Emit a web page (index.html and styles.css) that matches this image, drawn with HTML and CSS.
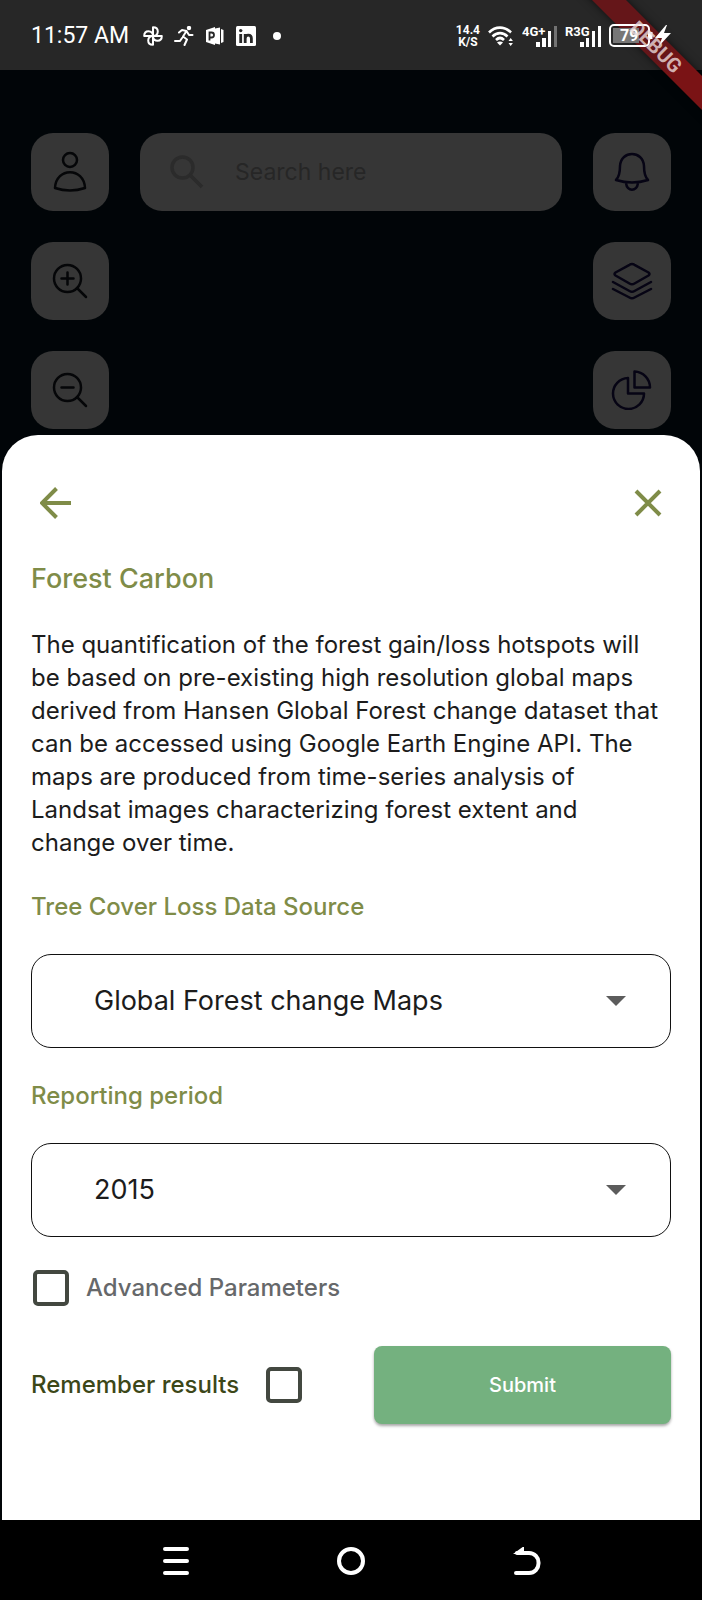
FILE: index.html
```html
<!DOCTYPE html>
<html lang="en">
<head>
<meta charset="utf-8">
<meta name="viewport" content="width=device-width, initial-scale=1">
<title>Forest Carbon</title>
<link rel="stylesheet" href="styles.css">
</head>
<body>
<header class="status">
  <div class="status-left">
    <span class="clock">11:57 AM</span>
    <svg width="20" height="20" viewBox="0 0 20 20" fill="none" stroke="#fff" stroke-width="2" stroke-linejoin="round"><path d="M10 10V1.200C13 1.200 14.800 3 14.800 5.500S13 10 10 10zM10 10H18.800C18.800 13 17 14.800 14.500 14.800S10 13 10 10zM10 10V18.800C7 18.800 5.200 17 5.200 14.500S7 10 10 10zM10 10H1.200C1.200 7 3 5.200 5.500 5.200S10 7 10 10z"/></svg>
    <svg width="20" height="20" viewBox="0 0 20 20" fill="none" stroke="#fff" stroke-width="2" stroke-linecap="round" stroke-linejoin="round"><circle cx="15" cy="2" r="1.200" fill="#fff"/><path d="M5 6.500L8 4l4.500 1L9 10.500l4 3L10.500 19M12.500 5l2.500 4h3.500M8 12l-2 3H1"/></svg>
    <svg width="20" height="20" viewBox="0 0 20 20"><path fill="#fff" d="M1 4l9-3v18l-9-3zM10 2.500l5-1v17l-5-1zM16 3l2.500 1v12L16 17z"/><path d="M4.500 14.500V6.500h2a2.300 2.300 0 010 5h-2" fill="none" stroke="#272727" stroke-width="1.800"/></svg>
    <svg width="20" height="20" viewBox="0 0 20 20"><rect width="20" height="20" rx="1.500" fill="#fff"/><circle cx="4.700" cy="4.600" r="1.700" fill="#272727"/><path d="M4.700 8v9M9.200 17V8M9.200 12.500c0-4.500 6.200-4.500 6.200 0V17" fill="none" stroke="#272727" stroke-width="2.800"/></svg>
    <span class="dot"></span>
  </div>
  <div class="status-right">
    <div class="speed"><span>14.4</span><span>K/S</span></div>
    <svg width="26" height="22" viewBox="0 0 26 22" fill="none" stroke="#fff" stroke-width="2.600"><path d="M1 7.500C7.500 1 16.500 1 23 7.500M4.500 11.500c4.500-4.500 10.500-4.500 15 0M8 15c2.500-2.500 5.500-2.500 8 0"/><path d="M9 17.500L12 20.500l3-3c-1.500-1.500-4.500-1.500-6 0z" fill="#fff" stroke="none"/><path d="M20.500 16l2.200-3 2.200 3zM20.500 18l2.200 3 2.200-3z" fill="#fff" stroke="none"/></svg>
    <svg class="signal" width="35" height="22" viewBox="0 0 35 22"><text x="0" y="11">4G+</text><path d="M14 17h4v5h-4zM20 13h4v9h-4zM26 6h3v16h-3z"/><path d="M32 1h3v21h-3z" opacity=".35"/></svg>
    <svg class="signal" width="36" height="22" viewBox="0 0 36 22"><text x="0" y="11">R3G</text><path d="M15 17h4v5h-4zM21 13h3v9h-3zM27 6h3v16h-3zM33 1h3v21h-3z"/></svg>
    <svg class="battery" width="62" height="24" viewBox="0 0 62 24"><rect x="1" y="1" width="39" height="21" rx="4" fill="none" stroke="#fff" stroke-width="2"/><rect x="4" y="4" width="26" height="15" fill="#777"/><path d="M42 8v7" stroke="#fff" stroke-width="3"/><text x="11" y="17">79</text><path d="M57 1L46 14h7l-3 8 12-13h-7l3-8z" fill="#fff"/></svg>
  </div>
</header>
<div class="debug"><span>DEBUG</span></div>

<main>
  <section class="map">
    <div class="tools">
      <button class="tile" aria-label="Profile"><svg width="36" height="44" viewBox="0 0 36 44"><circle cx="18" cy="10" r="7"/><path d="M3 38C4 17 32 17 33 38Q18 43 3 38z"/></svg></button>
      <button class="tile" aria-label="Zoom in"><svg width="36" height="36" viewBox="0 0 36 36"><circle cx="15.500" cy="15.500" r="13.500"/><path d="M25 25l9 9M15.500 9.500v12M9.500 15.500h12"/></svg></button>
      <button class="tile" aria-label="Zoom out"><svg width="36" height="36" viewBox="0 0 36 36"><circle cx="15.500" cy="15.500" r="13.500"/><path d="M25 25l9 9M9.500 15.500h12"/></svg></button>
    </div>
    <label class="search">
      <svg width="34" height="34" viewBox="0 0 34 34" fill="none" stroke="#2b2b2b" stroke-width="3.500"><circle cx="12.500" cy="12.500" r="10.500"/><path d="M20 20l12 12"/></svg>
      <input type="search" placeholder="Search here" aria-label="Search here">
    </label>
    <div class="tools navy">
      <button class="tile" aria-label="Notifications"><svg width="36" height="40" viewBox="0 0 36 40"><path d="M2 28q4-4 4-14C7-2 29-2 30 14q0 10 4 14Q18 33 2 28zM12 31c1 9 11 9 12 0"/></svg></button>
      <button class="tile" aria-label="Layers"><svg width="42" height="38" viewBox="0 0 42 38"><path d="M18.500 2.800q2.500-1.600 5 0l14 7.700q2 1.500 0 3l-14 8q-2.500 1.500-5 0l-14-8q-2-1.500 0-3zM2 20l16.500 9q2.500 1.500 5 0L40 20M2 27l16.500 8.500q2.500 1.500 5 0L40 27"/></svg></button>
      <button class="tile" aria-label="Charts"><svg width="42" height="40" viewBox="0 0 42 40"><path d="M17 8a15.500 15.500 0 1016 15.500H17zM23.500 1.500V17.500H39A16 16 0 0023.500 1.500z"/></svg></button>
    </div>
  </section>

  <form class="sheet">
    <div class="sheet-bar">
      <button type="button" class="icon" aria-label="Back"><svg width="32" height="32" viewBox="0 0 32 32"><path d="M31 16H3M16.500 1.500L2 16l14.500 14.500"/></svg></button>
      <button type="button" class="icon" aria-label="Close"><svg width="28" height="28" viewBox="0 0 28 28"><path d="M2 2l24 24M26 2L2 26"/></svg></button>
    </div>
    <h1>Forest Carbon</h1>
    <p>The quantification of the forest gain/loss hotspots will be based on pre-existing high resolution global maps derived from Hansen Global Forest change dataset that can be accessed using Google Earth Engine API. The maps are produced from time-series analysis of<br>Landsat images characterizing forest extent and<br>change over time.</p>
    <label class="field-label" for="source">Tree Cover Loss Data Source</label>
    <div class="select">
      <select id="source"><option>Global Forest change Maps</option></select>
      <svg width="20" height="10" viewBox="0 0 20 10"><path d="M0 0h20L10 10z"/></svg>
    </div>
    <label class="field-label" for="period">Reporting period</label>
    <div class="select">
      <select id="period"><option>2015</option></select>
      <svg width="20" height="10" viewBox="0 0 20 10"><path d="M0 0h20L10 10z"/></svg>
    </div>
    <label class="check advanced"><input type="checkbox"><span>Advanced Parameters</span></label>
    <div class="actions">
      <label class="check remember"><span>Remember results</span><input type="checkbox"></label>
      <button type="submit" class="submit">Submit</button>
    </div>
  </form>
</main>

<nav class="navbar">
  <button aria-label="Recent apps"><svg width="28" height="28" viewBox="0 0 28 28"><path d="M3 2h22M3 14h22M3 26h22"/></svg></button>
  <button aria-label="Home"><svg width="28" height="28" viewBox="0 0 28 28"><circle cx="14" cy="14" r="12"/></svg></button>
  <button aria-label="Back"><svg width="28" height="28" viewBox="0 0 28 28"><path d="M3 26h13a9.500 9.500 0 009.500-10A9.500 9.500 0 0016 6H4"/><path d="M3 6L10 1v5z" fill="#fff" stroke-width="2"/></svg></button>
</nav>
</body>
</html>
```
FILE: styles.css
```css
* { box-sizing: border-box; }

body {
  margin: 0;
  min-height: 100vh;
  display: flex;
  flex-direction: column;
  position: relative;
  overflow-x: hidden;
  background: #010508;
  font-family: Inter, "Liberation Sans", sans-serif;
}

button {
  border: 0;
  padding: 0;
  background: none;
  font-family: inherit;
}

svg { display: block; flex: none; }

/* Status bar */
.status {
  height: 70px;
  padding: 2px 31px 0;
  display: flex;
  align-items: center;
  justify-content: space-between;
  background: #272727;
  color: #fff;
  font-family: Roboto, sans-serif;
}

.status-left, .status-right { display: flex; align-items: center; }
.status-left { gap: 11px; }
.status-right { gap: 8px; position: relative; z-index: 2; }
.clock { font-size: 23px; line-height: 28px; margin-right: 3px; }
.dot { width: 8px; height: 8px; margin-left: 6px; border-radius: 50%; background: #fff; }

.speed {
  display: flex;
  flex-direction: column;
  align-items: center;
  font-size: 12px;
  font-weight: 700;
  line-height: 12px;
}

.signal { fill: #fff; font-size: 13px; font-weight: 700; }
.battery { fill: #fff; font-size: 16px; font-weight: 700; }

/* The band lies under the status icons, its lettering over them */
.debug {
  position: absolute;
  top: 0;
  right: 0;
  width: 140px;
  height: 140px;
  overflow: hidden;
  pointer-events: none;
}

.debug::before, .debug span {
  position: absolute;
  top: 35px;
  right: -54px;
  width: 200px;
  height: 24px;
  rotate: 45deg;
}

.debug::before {
  content: "";
  z-index: 1;
  background: linear-gradient(to right, #651619 55%, #7a1315 65%);
  box-shadow: 0 0 8px rgba(0, 0, 0, .6);
}

.debug span {
  z-index: 3;
  color: rgba(235, 220, 220, .8);
  font: 700 20px/24px Roboto, sans-serif;
  text-align: center;
}

main { flex: 1; display: flex; flex-direction: column; }

/* Dimmed map behind the sheet */
.map {
  padding: 63px 31px 6px;
  display: flex;
  align-items: flex-start;
  gap: 31px;
}

.tools { display: flex; flex-direction: column; gap: 31px; }

.tile {
  width: 78px;
  height: 78px;
  border-radius: 22px;
  background: #363636;
  display: grid;
  place-items: center;
}

.tile svg {
  fill: none;
  stroke: #050608;
  stroke-width: 2.5;
  stroke-linecap: round;
  stroke-linejoin: round;
}

.navy svg { stroke: #060414; }

.search {
  flex: 1;
  min-width: 0;
  height: 78px;
  padding: 0 30px;
  border-radius: 22px;
  background: #363636;
  display: flex;
  align-items: center;
  gap: 31px;
}

.search input {
  flex: 1;
  min-width: 0;
  border: 0;
  padding: 0;
  background: none;
  font: 400 23px/30px Inter, sans-serif;
  color: #222;
}

.search input::placeholder { color: #262626; opacity: 1; }

/* Sheet */
.sheet {
  flex: 1;
  margin: 0 2px;
  padding: 48px 29px 88px;
  border-radius: 36px 36px 0 0;
  background: #fff;
  color: #1c1c1c;
}

.sheet-bar { display: flex; justify-content: space-between; padding: 0 9px; }
.icon { height: 40px; display: grid; place-items: center; }
.icon svg { fill: none; stroke: #7f8c48; stroke-width: 4; }

h1 {
  margin: 39px 0 0;
  font-size: 27px;
  line-height: 34px;
  font-weight: 500;
  color: #7f8c48;
}

p { margin: 32px 0 0; font-size: 24px; line-height: 33px; }

.field-label {
  display: block;
  margin-top: 32px;
  font-size: 24px;
  line-height: 32px;
  font-weight: 500;
  color: #7f8c48;
}

.select { display: grid; align-items: center; margin-top: 31px; }
.select > * { grid-area: 1 / 1; }

.select select {
  appearance: none;
  width: 100%;
  height: 94px;
  padding: 0 80px 0 62px;
  border: 1px solid #111;
  border-radius: 20px;
  background: #fff;
  font: 400 27px/34px Inter, sans-serif;
  color: #1c1c1c;
}

.select svg { justify-self: end; margin-right: 45px; fill: #5c5c5c; pointer-events: none; }

.check { display: flex; align-items: center; font-size: 24px; line-height: 32px; font-weight: 500; }

.check input {
  appearance: none;
  flex: none;
  width: 36px;
  height: 36px;
  margin: 0 2px;
  border: 4px solid #434840;
  border-radius: 5px;
}

.advanced { margin-top: 33px; gap: 15px; color: #66686a; }
.actions { display: flex; align-items: center; justify-content: space-between; margin-top: 40px; }
.remember { gap: 25px; color: #3c4718; }

.submit {
  width: 297px;
  height: 78px;
  border-radius: 8px;
  background: #74b17f;
  box-shadow: 0 2px 3px rgba(0, 0, 0, .35);
  color: #fff;
  font-size: 20px;
  font-weight: 500;
}

/* System navigation */
.navbar {
  height: 80px;
  padding: 2px 12.5% 0;
  display: grid;
  grid-template-columns: repeat(3, 1fr);
  background: #000;
}

.navbar button { display: grid; place-items: center; }
.navbar svg { fill: none; stroke: #fff; stroke-width: 4; stroke-linecap: round; }
```
